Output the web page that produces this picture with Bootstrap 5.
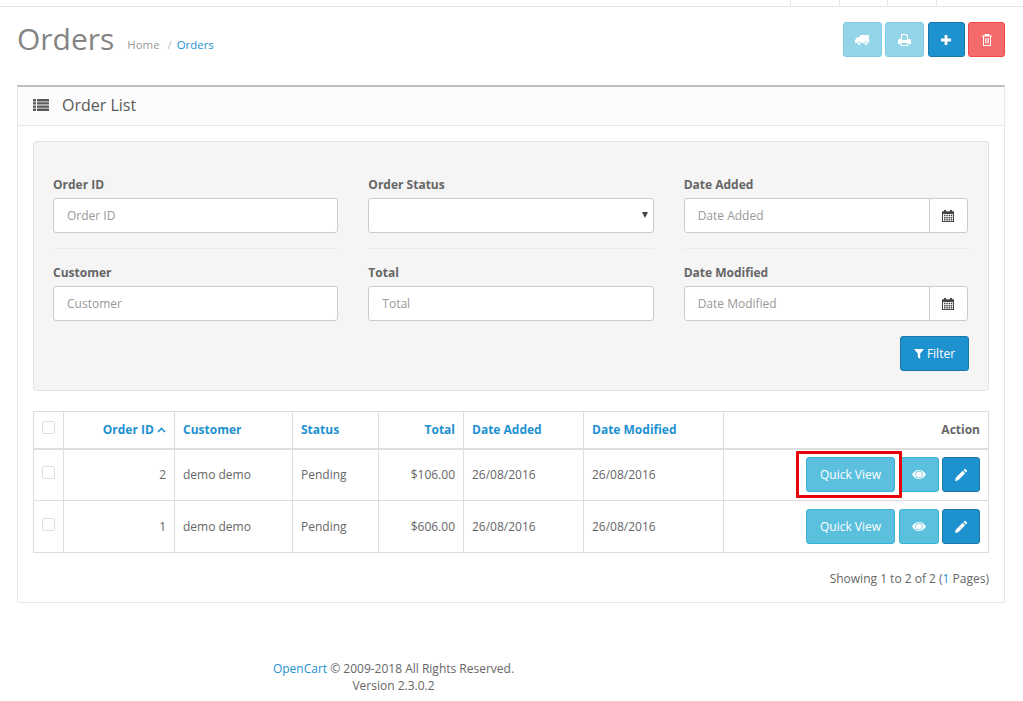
<!DOCTYPE html>
<html lang="en">
<head>
<meta charset="utf-8">
<title>Orders</title>
<link href="https://cdn.jsdelivr.net/npm/bootstrap@5.3.0/dist/css/bootstrap.min.css" rel="stylesheet">
<style>
html,body{overflow:hidden;height:701px}
body{font-family:"Open Sans",sans-serif;font-size:12px;color:#666;background:#fff;line-height:18px}
a{color:#1e91cf;text-decoration:none}
.topstrip{height:7px;border-bottom:1px solid #e5e5e5;display:flex;justify-content:flex-end;padding-right:39px}
.topstrip span{width:48.5px;border-left:1px solid #e5e5e5}
.pagehead{padding:15px 18px 0 17px;height:78px}
.pagetitle{font-size:30px;font-weight:400;line-height:34px;color:#848484;margin:0;font-family:"Open Sans",sans-serif}
.crumbs{margin:0 0 0 13px;list-style:none;font-size:11.4px;padding:12px 0 0}
.crumbs li a.homelink{color:#999}
.crumbs li+li::before{content:"/";color:#bbb;padding:0 5px 0 8px}
.actbtn{height:35px;padding:0;display:flex;align-items:center;justify-content:center;border-radius:3px;color:#fff}
.actbtn svg{fill:#fff;display:block}
.btngroup{gap:3.5px}
.w39{width:39px}.w37{width:37px}
.spaced{margin-right:1px}
.btn-primary.actbtn,.btn-primary.filterbtn{background:#1e91cf;border-color:#1978ab}
.btn-info.actbtn{background:#5bc0de;border-color:#39b3d7}
.btn-info.fadebtn{opacity:.65;background:#5bc0de;border-color:#39b3d7;color:#fff}
.btn-danger.actbtn{background:#f56b6b;border-color:#f24545;opacity:1}
.pad-panel{margin:0 18px 0 17px;border:1px solid #e8e8e8;border-top:2px solid #bfbfbf;border-radius:0;height:518px}
.pad-head{height:39px;background:#fcfcfc;border-bottom:1px solid #e8e8e8;display:flex;align-items:center;padding:0 15px 2px;color:#595959}
.pad-head svg{fill:#595959;margin-right:13px}
.pad-head h3{font-size:16px;font-weight:400;margin:0;font-family:"Open Sans",sans-serif;line-height:1;color:#595959}
.pad-body{padding:15px}
.filterwell{background:#f5f5f5;border:1px solid #e3e3e3;border-radius:3px;padding:19px;height:250px;margin-bottom:20px}
.filterwell .row{--bs-gutter-x:30px}
.fgroup{padding:15px 0;border-bottom:1px solid #ececec;height:88px}
.fgroup.nob{border-bottom:0;height:87px}
.fgroup label{font-weight:700;font-size:12px;line-height:18px;margin-bottom:4px;display:block;color:#666}
.fgroup .form-control,.fgroup .form-select{height:35px;font-size:12px;padding:8px 13px;border-color:#ccc;border-radius:3px;color:#555;line-height:18px}
.fgroup .form-control::placeholder{color:#999;opacity:1}
.fgroup .form-select{background-image:none;position:relative}
.selwrap{position:relative}
.selwrap::after{content:"";position:absolute;right:6px;top:14px;border-left:3px solid transparent;border-right:3px solid transparent;border-top:6px solid #444}
.calgroup{width:calc(100% - 1px)}
.calbtn{width:39px;padding:0;display:flex;align-items:center;justify-content:center;background:#fff;border:1px solid #ccc;border-radius:0 3px 3px 0}
.calbtn svg{fill:#444}
.filterbtn{height:35px;width:69px;padding:0;font-size:12px;border-radius:3px;display:flex;align-items:center;justify-content:center;gap:3px;color:#fff}
.filterbtn svg{fill:#fff}
.ordertable{--bs-table-color:#666;margin:0;table-layout:fixed;width:956px;font-size:12px;border-color:#ddd}
.ordertable th,.ordertable td{padding:0 8px;vertical-align:middle;border-color:#ddd}
.ordertable thead th{height:37px;font-weight:700}
.ordertable thead th a{color:#1e91cf}
.ordertable tbody tr{height:52px}
.ordertable>:not(caption)>*>*{border-width:1px;box-shadow:none}
.ordertable>thead>tr>th{border-bottom-width:2px}
.ordertable .form-check-input{width:13px;height:13px;margin:0;border-color:#ddd;border-radius:2px;background-color:#fff;display:block;position:relative;top:-2px}
.acts{display:flex;justify-content:flex-end;gap:3.5px}
.quick{height:35px;width:89px;padding:0;font-size:12px;border-radius:3px;background:#5bc0de;border-color:#39b3d7;color:#fff}
.markbox{position:relative;display:inline-block}
.markbox::after{content:"";position:absolute;left:-10px;right:-7px;top:-6px;bottom:-6px;border:3px solid #e8000b;border-radius:1px;pointer-events:none}
.w40{width:40px}.w38b{width:38px}
.pagerline{text-align:right;margin-top:17px;line-height:18px}
.foot{text-align:center;padding-right:236px;padding-top:57px;line-height:17px}
</style>
</head>
<body>
<div class="topstrip"><span></span><span></span><span></span><span></span></div>

<div class="pagehead d-flex justify-content-between">
  <div class="d-flex align-items-center align-self-start">
    <h1 class="pagetitle">Orders</h1>
    <ul class="crumbs d-flex">
      <li><a class="homelink" href="#">Home</a></li>
      <li><a href="#">Orders</a></li>
    </ul>
  </div>
  <div class="d-flex btngroup align-self-start">
    <button class="btn btn-info fadebtn actbtn w39" type="button" aria-label="Ship"><svg width="14" height="12" viewBox="0 0 14 12"><path d="M5 1h8a1 1 0 0 1 1 1v7h-1.200a2 2 0 0 0-3.800 0H6a2 2 0 0 0-3.800 0H0V6l2.500-3H5z"/><circle cx="4.100" cy="9.700" r="1.400"/><circle cx="10.900" cy="9.700" r="1.400"/></svg></button>
    <button class="btn btn-info fadebtn actbtn w39" type="button" aria-label="Print"><svg width="13" height="12" viewBox="0 0 13 12"><path fill-rule="evenodd" d="M3 0h5.500L10 1.500V5h1.500A1.500 1.500 0 0 1 13 6.500V10h-2.500v2h-8v-2H0V6.500A1.500 1.500 0 0 1 1.500 5H3zM4 1v5h5V2H8V1zM3.500 9v2h6V9z"/></svg></button>
    <button class="btn btn-primary actbtn w37" type="button" aria-label="Add"><svg width="10" height="10" viewBox="0 0 10 10"><path d="M3.600 0h2.800v3.600H10v2.800H6.400V10H3.600V6.400H0V3.600h3.600z"/></svg></button>
    <button class="btn btn-danger actbtn w37" type="button" aria-label="Delete"><svg width="10" height="12" viewBox="0 0 10 12"><path fill-rule="evenodd" d="M3 0h4l.7 1.500H10v1H9V12H1V2.500H0v-1h2.300zM2 2.500V11h6V2.500zM3.300 4h.8v5.500h-.8zm1.300 0h.8v5.500h-.8zm1.300 0h.8v5.500h-.8z"/></svg></button>
  </div>
</div>

<div class="pad-panel">
  <div class="pad-head">
    <svg width="16" height="12" viewBox="0 0 16 12"><path d="M0 0h3v2.400H0zM4 0h12v2.400H4zM0 3.200h3v2.400H0zM4 3.200h12v2.400H4zM0 6.400h3v2.400H0zM4 6.400h12v2.400H4zM0 9.600h3V12H0zM4 9.600h12V12H4z"/></svg>
    <h3>Order List</h3>
  </div>
  <div class="pad-body">
    <div class="filterwell">
      <div class="row">
        <div class="col-4">
          <div class="fgroup"><label for="f1">Order ID</label><input id="f1" class="form-control" placeholder="Order ID"></div>
          <div class="fgroup nob"><label for="f2">Customer</label><input id="f2" class="form-control" placeholder="Customer"></div>
        </div>
        <div class="col-4">
          <div class="fgroup"><label for="f3">Order Status</label><div class="selwrap"><select id="f3" class="form-select"><option></option></select></div></div>
          <div class="fgroup nob"><label for="f4">Total</label><input id="f4" class="form-control" placeholder="Total"></div>
        </div>
        <div class="col-4">
          <div class="fgroup"><label for="f5">Date Added</label>
            <div class="input-group calgroup"><input id="f5" class="form-control" placeholder="Date Added"><button class="btn calbtn" type="button" aria-label="Pick date"><svg width="12" height="12" viewBox="0 0 12 12"><path fill-rule="evenodd" d="M2 0h2v1.200h4V0h2v1.200h2V12H0V1.200h2zM1 4v7h10V4zm1 .8h1.500v1.500H2zm2.300 0h1.500v1.500H4.300zm2.300 0h1.500v1.500H6.600zm2.200 0h1.500v1.500H8.800zM2 7h1.500v1.500H2zm2.300 0h1.500v1.500H4.300zm2.300 0h1.500v1.500H6.600zm2.200 0h1.500v1.500H8.800zM2 9.100h1.500v1.300H2zm2.300 0h1.500v1.300H4.300zm2.300 0h1.500v1.300H6.600zm2.200 0h1.500v1.300H8.800z"/></svg></button></div>
          </div>
          <div class="fgroup nob"><label for="f6">Date Modified</label>
            <div class="input-group calgroup"><input id="f6" class="form-control" placeholder="Date Modified"><button class="btn calbtn" type="button" aria-label="Pick date"><svg width="12" height="12" viewBox="0 0 12 12"><path fill-rule="evenodd" d="M2 0h2v1.200h4V0h2v1.200h2V12H0V1.200h2zM1 4v7h10V4zm1 .8h1.500v1.500H2zm2.300 0h1.500v1.500H4.300zm2.300 0h1.500v1.500H6.600zm2.200 0h1.500v1.500H8.800zM2 7h1.500v1.500H2zm2.300 0h1.500v1.500H4.300zm2.300 0h1.500v1.500H6.600zm2.200 0h1.500v1.500H8.800zM2 9.100h1.500v1.300H2zm2.300 0h1.500v1.300H4.300zm2.300 0h1.500v1.300H6.600zm2.200 0h1.500v1.300H8.800z"/></svg></button></div>
          </div>
          <div class="d-flex justify-content-end"><button class="btn btn-primary filterbtn" type="button"><svg width="10" height="10" viewBox="0 0 10 10"><path d="M0 0h10L6.200 4.500V10L3.800 8.300V4.500z"/></svg>Filter</button></div>
        </div>
      </div>
    </div>

    <table class="table table-bordered ordertable">
      <colgroup><col style="width:30px"><col style="width:111px"><col style="width:118px"><col style="width:86px"><col style="width:85px"><col style="width:120px"><col style="width:140px"><col></colgroup>
      <thead>
        <tr>
          <th class="text-center"><input class="form-check-input" type="checkbox" aria-label="Select all"></th>
          <th class="text-end"><a href="#">Order ID <svg width="9" height="6" viewBox="0 0 9 6" style="vertical-align:1px"><path d="M1 5l3.500-3.500L8 5" fill="none" stroke="#1e91cf" stroke-width="1.600"/></svg></a></th>
          <th><a href="#">Customer</a></th>
          <th><a href="#">Status</a></th>
          <th class="text-end"><a href="#">Total</a></th>
          <th><a href="#">Date Added</a></th>
          <th><a href="#">Date Modified</a></th>
          <th class="text-end">Action</th>
        </tr>
      </thead>
      <tbody>
        <tr>
          <td class="text-center"><input class="form-check-input" type="checkbox" aria-label="Select order 2"></td>
          <td class="text-end">2</td><td>demo demo</td><td>Pending</td><td class="text-end">$106.00</td><td>26/08/2016</td><td>26/08/2016</td>
          <td><div class="acts"><span class="markbox"><button class="btn quick d-block" type="button">Quick View</button></span>
            <button class="btn btn-info actbtn w40" type="button" aria-label="View"><svg width="14" height="9" viewBox="0 0 14 9"><path fill-rule="evenodd" d="M7 0c3 0 5.500 2 7 4.500C12.500 7 10 9 7 9S1.500 7 0 4.500C1.500 2 4 0 7 0zm0 .8a3.700 3.700 0 1 0 0 7.400 3.700 3.700 0 0 0 0-7.400z"/><circle cx="7" cy="4.500" r="3"/></svg></button>
            <button class="btn btn-primary actbtn w38b" type="button" aria-label="Edit"><svg width="12" height="12" viewBox="0 0 11 11"><path d="M0 11l.7-3L7 1.700 9.300 4 3 10.300zM7.700 1l.7-.7a1 1 0 0 1 1.400 0l.9.900a1 1 0 0 1 0 1.400l-.7.700z"/></svg></button></div></td>
        </tr>
        <tr>
          <td class="text-center"><input class="form-check-input" type="checkbox" aria-label="Select order 1"></td>
          <td class="text-end">1</td><td>demo demo</td><td>Pending</td><td class="text-end">$606.00</td><td>26/08/2016</td><td>26/08/2016</td>
          <td><div class="acts"><button class="btn quick" type="button">Quick View</button>
            <button class="btn btn-info actbtn w40" type="button" aria-label="View"><svg width="14" height="9" viewBox="0 0 14 9"><path fill-rule="evenodd" d="M7 0c3 0 5.500 2 7 4.500C12.500 7 10 9 7 9S1.500 7 0 4.500C1.500 2 4 0 7 0zm0 .8a3.700 3.700 0 1 0 0 7.400 3.700 3.700 0 0 0 0-7.400z"/><circle cx="7" cy="4.500" r="3"/></svg></button>
            <button class="btn btn-primary actbtn w38b" type="button" aria-label="Edit"><svg width="12" height="12" viewBox="0 0 11 11"><path d="M0 11l.7-3L7 1.700 9.300 4 3 10.300zM7.700 1l.7-.7a1 1 0 0 1 1.400 0l.9.900a1 1 0 0 1 0 1.400l-.7.700z"/></svg></button></div></td>
        </tr>
      </tbody>
    </table>
    <div class="pagerline">Showing 1 to 2 of 2 (<a href="#">1</a> Pages)</div>
  </div>
</div>

<footer class="foot"><a href="#">OpenCart</a> © 2009-2018 All Rights Reserved.<br>Version 2.3.0.2</footer>
<script src="https://cdn.jsdelivr.net/npm/bootstrap@5.3.0/dist/js/bootstrap.bundle.min.js"></script>
</body>
</html>
